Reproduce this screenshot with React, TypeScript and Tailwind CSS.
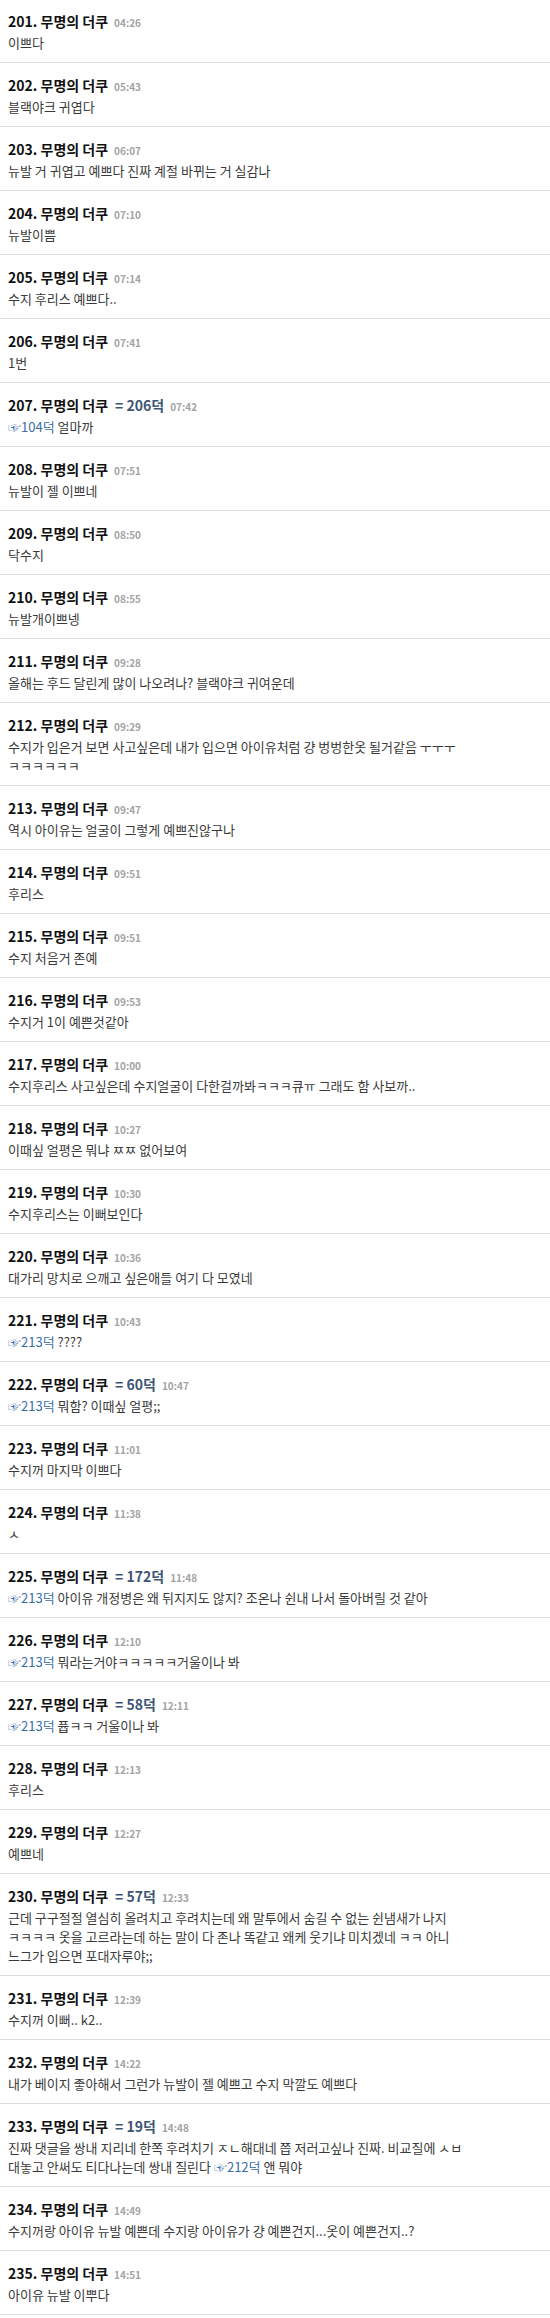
import React from "react";

type Seg = string | { link: string };
type Row = { n: number; t: string; ref?: string; lines: Seg[][] };

const L = (s: string) => ({ link: s });

const rows: Row[] = [
  { n: 201, t: "04:26", lines: [["이쁘다"]] },
  { n: 202, t: "05:43", lines: [["블랙야크 귀엽다"]] },
  { n: 203, t: "06:07", lines: [["뉴발 거 귀엽고 예쁘다 진짜 계절 바뀌는 거 실감나"]] },
  { n: 204, t: "07:10", lines: [["뉴발이쁨"]] },
  { n: 205, t: "07:14", lines: [["수지 후리스 예쁘다.."]] },
  { n: 206, t: "07:41", lines: [["1번"]] },
  { n: 207, t: "07:42", ref: "206덕", lines: [[L("☞104덕"), " 얼마까"]] },
  { n: 208, t: "07:51", lines: [["뉴발이 젤 이쁘네"]] },
  { n: 209, t: "08:50", lines: [["닥수지"]] },
  { n: 210, t: "08:55", lines: [["뉴발개이쁘넹"]] },
  { n: 211, t: "09:28", lines: [["올해는 후드 달린게 많이 나오려나? 블랙야크 귀여운데"]] },
  {
    n: 212,
    t: "09:29",
    lines: [
      ["수지가 입은거 보면 사고싶은데 내가 입으면 아이유처럼 걍 벙벙한옷 될거같음 ㅜㅜㅜ"],
      ["ㅋㅋㅋㅋㅋㅋ"],
    ],
  },
  { n: 213, t: "09:47", lines: [["역시 아이유는 얼굴이 그렇게 예쁘진않구나"]] },
  { n: 214, t: "09:51", lines: [["후리스"]] },
  { n: 215, t: "09:51", lines: [["수지 처음거 존예"]] },
  { n: 216, t: "09:53", lines: [["수지거 1이 예쁜것같아"]] },
  { n: 217, t: "10:00", lines: [["수지후리스 사고싶은데 수지얼굴이 다한걸까봐ㅋㅋㅋ큐ㅠ 그래도 함 사보까.."]] },
  { n: 218, t: "10:27", lines: [["이때싶 얼평은 뭐냐 ㅉㅉ 없어보여"]] },
  { n: 219, t: "10:30", lines: [["수지후리스는 이뻐보인다"]] },
  { n: 220, t: "10:36", lines: [["대가리 망치로 으깨고 싶은애들 여기 다 모였네"]] },
  { n: 221, t: "10:43", lines: [[L("☞213덕"), " ????"]] },
  { n: 222, t: "10:47", ref: "60덕", lines: [[L("☞213덕"), " 뭐함? 이때싶 얼평;;"]] },
  { n: 223, t: "11:01", lines: [["수지꺼 마지막 이쁘다"]] },
  { n: 224, t: "11:38", lines: [["ㅅ"]] },
  {
    n: 225,
    t: "11:48",
    ref: "172덕",
    lines: [[L("☞213덕"), " 아이유 개정병은 왜 뒤지지도 않지? 조온나 쉰내 나서 돌아버릴 것 같아"]],
  },
  { n: 226, t: "12:10", lines: [[L("☞213덕"), " 뭐라는거야ㅋㅋㅋㅋㅋ거울이나 봐"]] },
  { n: 227, t: "12:11", ref: "58덕", lines: [[L("☞213덕"), " 퓹ㅋㅋ 거울이나 봐"]] },
  { n: 228, t: "12:13", lines: [["후리스"]] },
  { n: 229, t: "12:27", lines: [["예쁘네"]] },
  {
    n: 230,
    t: "12:33",
    ref: "57덕",
    lines: [
      ["근데 구구절절 열심히 올려치고 후려치는데 왜 말투에서 숨길 수 없는 쉰냄새가 나지"],
      ["ㅋㅋㅋㅋ 옷을 고르라는데 하는 말이 다 존나 똑같고 왜케 웃기냐 미치겠네 ㅋㅋ 아니"],
      ["느그가 입으면 포대자루야;;"],
    ],
  },
  { n: 231, t: "12:39", lines: [["수지꺼 이뻐.. k2.."]] },
  { n: 232, t: "14:22", lines: [["내가 베이지 좋아해서 그런가 뉴발이 젤 예쁘고 수지 막깔도 예쁘다"]] },
  {
    n: 233,
    t: "14:48",
    ref: "19덕",
    lines: [
      ["진짜 댓글을 쌍내 지리네 한쪽 후려치기 ㅈㄴ해대네 쯥 저러고싶나 진짜. 비교질에 ㅅㅂ"],
      ["대놓고 안써도 티다나는데 쌍내 질린다 ", L("☞212덕"), " 앤 뭐야"],
    ],
  },
  { n: 234, t: "14:49", lines: [["수지꺼랑 아이유 뉴발 예쁜데 수지랑 아이유가 걍 예쁜건지...옷이 예쁜건지..?"]] },
  { n: 235, t: "14:51", lines: [["아이유 뉴발 이뿌다"]] },
];

const font = { fontFamily: '"Noto Sans CJK KR", "Noto Sans", sans-serif' };

function Comment({ r, first }: { r: Row; first: boolean }) {
  return (
    <div className={`border-b border-[#dddddd] px-2 pb-[10px] ${first ? "pt-[11px]" : "pt-[12px]"}`}>
      <div className="flex h-[20px] items-baseline leading-[20px] whitespace-nowrap">
        <span className="text-[14px] font-bold text-[#111111]">
          {r.n}. 무명의 더쿠
        </span>
        {r.ref && (
          <span className="ml-[7px] text-[14px] font-semibold text-[#3e5574]">
            = {r.ref}
          </span>
        )}
        <span className="ml-[6px] text-[10px] font-bold text-[#a3a3a3]">{r.t}</span>
      </div>
      <div className="mt-[2px] text-[13px] leading-[19px] text-[#3a3a3a]">
        {r.lines.map((line, i) => (
          <div key={i} className="whitespace-nowrap">
            {line.map((s, j) =>
              typeof s === "string" ? (
                <span key={j}>{s}</span>
              ) : (
                <span key={j} className="text-[#3a6ea8]">
                  {s.link}
                </span>
              )
            )}
          </div>
        ))}
      </div>
    </div>
  );
}

export default function App() {
  return (
    <div className="w-[550px] bg-white pb-[3px]" style={font}>
      {rows.map((r, i) => (
        <Comment key={r.n} r={r} first={i === 0} />
      ))}
    </div>
  );
}
